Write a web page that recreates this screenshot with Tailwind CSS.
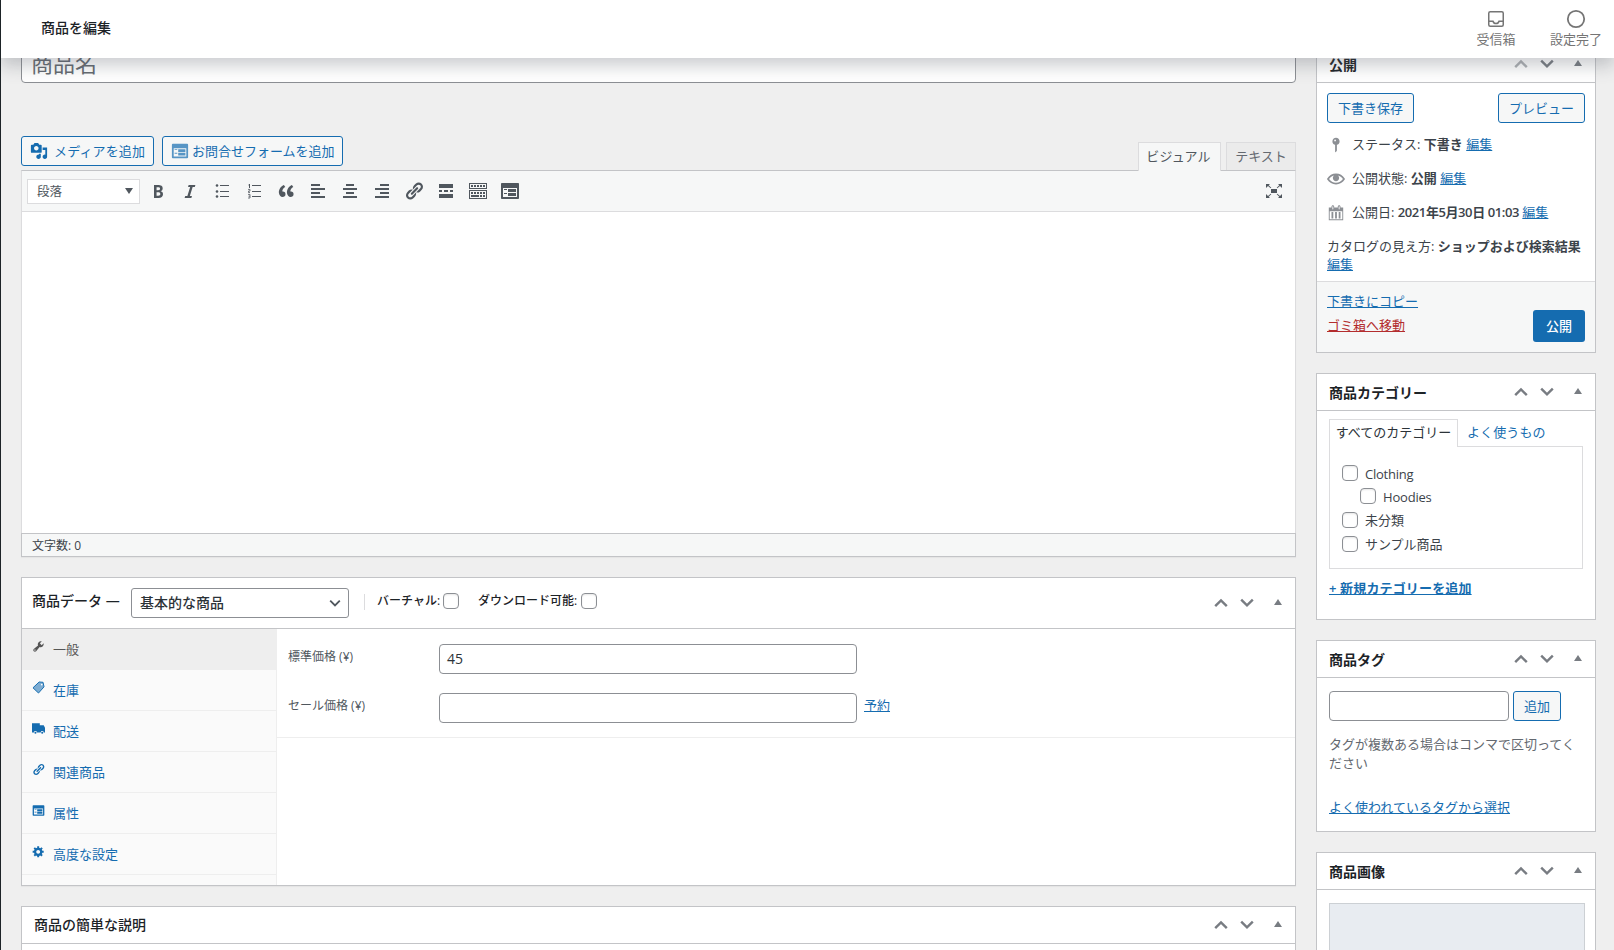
<!DOCTYPE html>
<html lang="ja">
<head>
<meta charset="utf-8">
<title>商品を編集</title>
<script src="https://cdn.jsdelivr.net/npm/@tailwindcss/browser@4"></script>
</head>
<body class="relative w-[1614px] h-[950px] overflow-hidden bg-[#efefef] border-l border-[#1d2327] text-[13px] leading-[18px] text-[#3c434a] font-['Open_Sans','Noto_Sans_CJK_JP',sans-serif]">
<svg class="hidden">
  <symbol id="up" viewBox="0 0 20 20"><path d="M4.200 13.200 10 7.400l5.800 5.800" fill="none" stroke="currentColor" stroke-width="2.400"/></symbol>
  <symbol id="down" viewBox="0 0 20 20"><path d="M4.200 6.600 10 12.400l5.800-5.800" fill="none" stroke="currentColor" stroke-width="2.400"/></symbol>
  <symbol id="tri" viewBox="0 0 8 6"><path d="M4 0l4 6H0z"/></symbol>
  <symbol id="link" viewBox="0 0 20 20"><path d="M17.74 2.76c1.68 1.69 1.68 4.41 0 6.1l-1.53 1.52c-1.12 1.12-2.7 1.47-4.14 1.09l2.62-2.61.76-.77.76-.76c.84-.84.84-2.2 0-3.04-.84-.85-2.2-.85-3.04 0l-.77.76-3.38 3.38c-.37-1.44-.02-3.02 1.1-4.14l1.52-1.53c1.69-1.68 4.42-1.68 6.1 0zM8.59 13.43l5.34-5.34c.42-.42.42-1.1 0-1.52-.44-.43-1.13-.39-1.53 0l-5.33 5.34c-.42.42-.42 1.1 0 1.52.44.43 1.13.39 1.52 0zm-.76 2.29l4.14-4.15c.38 1.44.03 3.02-1.09 4.14l-1.52 1.53c-1.69 1.68-4.41 1.68-6.1 0-1.68-1.68-1.68-4.42 0-6.1l1.53-1.52c1.12-1.12 2.7-1.47 4.14-1.1l-4.14 4.15c-.85.84-.85 2.2 0 3.05.84.84 2.2.84 3.04 0z"/></symbol>
  <symbol id="form" viewBox="0 0 20 20"><path fill-rule="evenodd" d="M2 2h16c.55 0 1 .45 1 1v14c0 .55-.45 1-1 1H2c-.55 0-1-.45-1-1V3c0-.55.45-1 1-1zm15 14V7H3v9h14zM4 8v1h3V8H4zm4 0v3h8V8H8zm-4 4v1h3v-1H4zm4 0v3h8v-3H8z"/></symbol>
</svg>

<!-- edge of the collapsed admin menu -->
<div class="absolute -left-px top-[372px] w-px h-[34px] bg-[#efefef] border-y-[9px] border-[#0a6cb3]"></div>

<header class="relative z-10 h-[58px] bg-white flex items-center justify-between pl-10 shadow-[0_8px_16px_0_rgba(85,93,102,0.3)]">
  <h1 class="text-[14px] leading-5 font-medium text-[#1d2327] -mt-0.5">商品を編集</h1>
  <div class="flex text-[#757575] text-[13px] leading-4 -mt-1 -mr-[2px]">
    <div class="w-20 flex flex-col items-center">
      <svg class="w-6 h-6" viewBox="0 0 24 24" fill="none" stroke="currentColor" stroke-width="1.5"><rect x="4.75" y="4.75" width="14.5" height="14.5" rx="1.5"/><path d="M5 14.200h4c.4 1.500 1.500 2.300 3 2.300s2.600-.8 3-2.300h4"/></svg>
      <span>受信箱</span>
    </div>
    <div class="w-20 flex flex-col items-center">
      <svg class="w-6 h-6" viewBox="0 0 24 24" fill="none" stroke="currentColor" stroke-width="1.8"><circle cx="12" cy="12" r="8.200"/></svg>
      <span>設定完了</span>
    </div>
  </div>
</header>

<div class="flex gap-5 pl-5">
<main class="w-[1275px] shrink-0">
  <div class="-mt-[14px] h-[39px] bg-white border border-[#8c8f94] rounded-[4px] pl-[9px] pb-0.5 flex items-center text-[22px] text-[#646970]">商品名</div>

  <div class="mt-[53px] h-[35px] flex items-start justify-between">
    <div class="flex gap-2 text-[#156cb0]">
      <button class="w-[133px] h-[30px] border border-[#156cb0] rounded-[3px] bg-[#f6f7f7] flex items-center pl-2 gap-1.5">
        <svg class="w-[18px] h-[18px] fill-current" viewBox="0 0 20 20"><path fill-rule="evenodd" d="M13 11V4c0-.55-.45-1-1-1h-1.670L9 1H5L3.670 3H2c-.55 0-1 .45-1 1v7c0 .55.45 1 1 1h10c.55 0 1-.45 1-1zM7 4.500c1.380 0 2.500 1.120 2.500 2.500S8.380 9.500 7 9.500 4.500 8.380 4.500 7 5.620 4.500 7 4.500zM14 6h5v10.500c0 1.380-1.120 2.500-2.500 2.500S14 17.880 14 16.500s1.120-2.500 2.500-2.500c.17 0 .34.02.5.05V9h-3V6zm-4 8.050V13h2v3.500c0 1.380-1.120 2.500-2.500 2.500S7 17.880 7 16.500 8.120 14 9.500 14c.17 0 .34.02.5.05z"/></svg>
        <span class="tracking-[0.15px]">メディアを追加</span>
      </button>
      <button class="w-[181px] h-[30px] border border-[#156cb0] rounded-[3px] bg-[#f6f7f7] flex items-center pl-2 gap-[3px]">
        <svg class="w-[18px] h-[18px] fill-current opacity-70"><use href="#form"/></svg>
        <span>お問合せフォームを追加</span>
      </button>
    </div>
    <div class="flex gap-[5px] pt-1.5">
      <div class="relative z-[1] w-[83px] h-[29px] pb-0.5 bg-[#f6f7f7] border border-b-0 border-[#dcdcde] flex items-center justify-center text-[#50575e] pr-0.5 tracking-[0.15px]">ビジュアル</div>
      <div class="w-[70px] h-7 pb-0.5 bg-[#ebebeb] border border-b-0 border-[#dcdcde] flex items-center justify-center text-[#646970]">テキスト</div>
    </div>
  </div>

  <section class="h-[387px] border border-[#dcdcde] border-t-[#c3c4c7] bg-white flex flex-col mb-5 -mt-px shadow-[0_1px_1px_rgba(0,0,0,0.04)]">
    <div class="h-[41px] shrink-0 bg-[#f6f7f7] border-b border-[#dcdcde] flex items-center pl-[5px] text-[#50575e]">
      <div class="w-[113px] h-[25px] bg-white border border-[#dcdcde] flex items-center justify-between pl-[9px] pr-1.5 mr-0.5 text-[12.5px]"><span class="pt-px">段落</span><svg class="w-2 h-1.5 fill-current" viewBox="0 0 8 6"><path d="M0 0h8L4 6z"/></svg></div>
      <div class="flex text-[#50575e]">
        <div class="w-8 flex justify-center"><svg class="w-5 h-5 fill-current" viewBox="0 0 20 20"><path fill-rule="evenodd" d="M6 4v13h4.540c1.370 0 2.460-.33 3.260-1 .8-.66 1.200-1.580 1.200-2.770 0-.84-.17-1.510-.51-2.010s-.9-.85-1.670-1.030v-.09c.57-.1 1.020-.4 1.360-.9s.51-1.130.51-1.910c0-1.140-.39-1.980-1.170-2.500C12.750 4.260 11.500 4 9.780 4H6zm2.570 5.150V6.260h1.360c.73 0 1.270.11 1.610.32.34.22.51.58.51 1.070 0 .54-.16.92-.47 1.150s-.82.35-1.510.35h-1.500zm0 2.190h1.600c1.440 0 2.160.53 2.160 1.610 0 .6-.17 1.050-.51 1.340s-.86.43-1.570.43H8.570v-3.380z"/></svg></div>
        <div class="w-8 flex justify-center"><svg class="w-5 h-5 fill-current" viewBox="0 0 20 20"><path d="M14.780 6h-2.130l-2.800 9h2.120l-.62 2H4.600l.62-2h2.140l2.800-9H8.030l.62-2h6.750z"/></svg></div>
        <div class="w-8 flex justify-center pl-px"><svg class="w-5 h-5 fill-current" viewBox="0 0 20 20"><circle cx="4" cy="4.500" r="1.300"/><circle cx="4" cy="10.500" r="1.300"/><circle cx="4" cy="15.500" r="1.300"/><path d="M7 4h9v1H7zM7 10h9v1H7zM7 15h9v1H7z"/></svg></div>
        <div class="w-8 flex justify-center pl-px"><svg class="w-5 h-5 fill-current" viewBox="0 0 20 20"><path d="M7 4h9v1H7zM7 10h9v1H7zM7 15h9v1H7zM4 3h1v4H4zM3.500 3.500h1v1h-1z"/><path d="M3 8.400h2v1.700H3.500v1.400H5M3 13.400h2v3.600H3M3.500 15.200H5" fill="none" stroke="currentColor" stroke-width=".8"/></svg></div>
        <div class="w-8 flex justify-center"><svg class="w-5 h-5 fill-current" viewBox="0 0 20 20"><path d="M9.490 13.220c0-.74-.2-1.380-.61-1.900-.62-.78-1.830-.88-2.530-.72-.29-1.650 1.110-3.750 2.920-4.650L7.880 4c-2.730 1.300-5.420 4.280-4.960 8.050C3.210 14.430 4.590 16 6.540 16c.85 0 1.560-.25 2.120-.75s.83-1.180.83-2.030zm8.050 0c0-.74-.2-1.380-.61-1.900-.63-.78-1.830-.88-2.530-.72-.29-1.650 1.110-3.750 2.920-4.650L15.930 4c-2.730 1.300-5.410 4.280-4.950 8.050.29 2.380 1.660 3.950 3.610 3.950.85 0 1.560-.25 2.120-.75s.83-1.180.83-2.030z"/></svg></div>
        <div class="w-8 flex justify-center"><svg class="w-5 h-5 fill-current" viewBox="0 0 20 20"><path d="M12 5V3H3v2h9zm5 4V7H3v2h14zm-5 4v-2H3v2h9zm5 4v-2H3v2h14z"/></svg></div>
        <div class="w-8 flex justify-center"><svg class="w-5 h-5 fill-current" viewBox="0 0 20 20"><path d="M14 5V3H6v2h8zm3 4V7H3v2h14zm-3 4v-2H6v2h8zm3 4v-2H3v2h14z"/></svg></div>
        <div class="w-8 flex justify-center"><svg class="w-5 h-5 fill-current" viewBox="0 0 20 20"><path d="M17 5V3H8v2h9zm0 4V7H3v2h14zm0 4v-2H8v2h9zm0 4v-2H3v2h14z"/></svg></div>
        <div class="w-8 flex justify-center"><svg class="w-5 h-5 fill-current"><use href="#link"/></svg></div>
        <div class="w-8 flex justify-center"><svg class="w-5 h-5 fill-current" viewBox="0 0 20 20"><path d="M17 7V3H3v4h14zM6 11V9H3v2h3zm6 0V9H8v2h4zm5 0V9h-3v2h3zm0 6v-4H3v4h14z"/></svg></div>
        <div class="w-8 flex justify-center"><svg class="w-5 h-5 fill-current" viewBox="0 0 20 20"><path fill-rule="evenodd" d="M1 2h18v6H1zM2 3v4h16V3zM3 4h2v2H3zM6 4h2v2H6zM9 4h2v2H9zM12 4h2v2h-2zM15 4h2v2h-2zM1 9h18v9H1zM2 10v7h16v-7zM3 11h2v2H3zM6 11h2v2H6zM9 11h2v2H9zM12 11h2v2h-2zM15 11h2v2h-2zM3 14h8v2H3zM12 14h2v2h-2zM15 14h2v2h-2z"/></svg></div>
        <div class="w-8 flex justify-center"><svg class="w-5 h-5 fill-current"><use href="#form"/></svg></div>
      </div>
      <svg class="w-5 h-5 fill-current ml-auto mr-[11px]" viewBox="0 0 20 20"><path d="M7 8h6v4H7zM2 3h4L4.700 4.300l2.600 2.400-.6.600-2.700-2.300L2 7zM18 3h-4l1.300 1.300-2.600 2.400.6.600 2.700-2.300L18 7zM2 17h4l-1.300-1.300 2.600-2.400-.6-.6L4 15l-2-2zM18 17h-4l1.300-1.300-2.600-2.400.6-.6L16 15l2-2z"/></svg>
    </div>
    <div class="flex-1"></div>
    <div class="h-6 shrink-0 -mx-px -mb-px border border-[#c3c4c7] bg-[#f6f7f7] flex items-center pl-2.5 pt-0.5 text-[12px]">文字数: 0</div>
  </section>

  <section class="h-[309px] border border-[#c3c4c7] bg-white flex flex-col shadow-[0_1px_1px_rgba(0,0,0,0.04)]">
    <div class="h-[51px] shrink-0 border-b border-[#c3c4c7] flex items-center pl-2.5 text-[#1d2327] font-medium">
      <span class="text-[14px] w-[99px] -mt-1">商品データ —</span>
      <div class="w-[218px] h-[30px] border border-[#8c8f94] rounded-[3px] flex items-center justify-between pl-2 pr-[5px] text-[14px] text-[#2c3338]">基本的な商品<svg class="w-4 h-4 text-[#50575e]" viewBox="0 0 20 20" fill="none" stroke="currentColor" stroke-width="2.300"><path d="M4 7l6 6 6-6"/></svg></div>
      <div class="ml-[15px] w-px h-4 -mt-0.5 bg-[#dcdcde]"></div>
      <div class="flex items-center -mt-1 text-[12px]">
        <span class="ml-3 w-[66px]">バーチャル:</span><span class="w-4 h-4 border border-[#8c8f94] rounded-[4px] bg-white shadow-[inset_0_1px_2px_rgba(0,0,0,0.1)]"></span>
        <span class="ml-[19px] w-[103px]">ダウンロード可能:</span><span class="w-4 h-4 border border-[#8c8f94] rounded-[4px] bg-white shadow-[inset_0_1px_2px_rgba(0,0,0,0.1)]"></span>
      </div>
      <div class="ml-auto flex items-center text-[#787c82] pr-[13px]"><svg class="w-5 h-5 mr-1.5"><use href="#up"/></svg><svg class="w-5 h-5"><use href="#down"/></svg><svg class="w-2 h-1.5 ml-[17px] -mt-0.5 fill-current"><use href="#tri"/></svg></div>
    </div>
    <div class="flex flex-1">
      <nav class="w-[255px] shrink-0 bg-[#fafafa] border-r border-[#eee] text-[#156cb0]">
        <div class="h-[41px] -mr-px bg-[#eee] border-b border-[#eee] flex items-center pl-2.5 pb-px gap-2 text-[#555]"><svg class="w-[13px] h-[13px] -mt-1 fill-current" viewBox="0 0 20 20"><path fill-rule="evenodd" d="M16.680 9.770c-1.340 1.340-3.300 1.670-4.950.99l-5.410 6.520c-.99.99-2.590.99-3.580 0s-.99-2.590 0-3.570l6.520-5.420c-.68-1.650-.35-3.610.99-4.950 1.280-1.280 3.120-1.620 4.720-1.060l-2.890 2.890 2.820 2.820 2.860-2.870c.53 1.580.18 3.390-1.080 4.650zM3.810 16.210c.4.39 1.040.39 1.430 0 .4-.4.4-1.040 0-1.430-.39-.4-1.030-.4-1.430 0-.39.39-.39 1.030 0 1.430z"/></svg>一般</div>
        <div class="h-[41px] border-b border-[#eee] flex items-center pl-2.5 pb-px gap-2"><svg class="w-[13px] h-[13px] -mt-1" viewBox="0 0 20 20"><path d="M11 1.500 17 2l1.500 7L10 18.500 1.500 10.500z" fill="#156cb0" fill-opacity=".55" stroke="#156cb0" stroke-width="1.500"/><circle cx="15" cy="5.500" r="1.300" fill="#fff"/></svg>在庫</div>
        <div class="h-[41px] border-b border-[#eee] flex items-center pl-2.5 pb-px gap-2"><svg class="w-[13px] h-[13px] -mt-1 fill-current" viewBox="0 0 20 20"><path d="M0 2h12v3h6l2 4v7h-2a2.300 2.300 0 0 0-4.600 0H7.600a2.300 2.300 0 0 0-4.600 0H0z"/><circle cx="5.300" cy="16.500" r="1.600"/><circle cx="15.700" cy="16.500" r="1.600"/></svg>配送</div>
        <div class="h-[41px] border-b border-[#eee] flex items-center pl-2.5 pb-px gap-2"><svg class="w-[13px] h-[13px] -mt-1 fill-current"><use href="#link"/></svg>関連商品</div>
        <div class="h-[41px] border-b border-[#eee] flex items-center pl-2.5 pb-px gap-2"><svg class="w-[13px] h-[13px] -mt-1 fill-current"><use href="#form"/></svg>属性</div>
        <div class="h-[41px] border-b border-[#eee] flex items-center pl-2.5 pb-px gap-2"><svg class="w-[13px] h-[13px] -mt-1 fill-current" viewBox="0 0 20 20"><path fill-rule="evenodd" d="M18 12h-2.180c-.17.7-.44 1.350-.81 1.930l1.540 1.540-2.100 2.100-1.540-1.540c-.58.36-1.230.63-1.910.79V19H8v-2.180c-.68-.16-1.330-.43-1.910-.79l-1.540 1.540-2.120-2.120 1.540-1.540c-.36-.58-.63-1.230-.79-1.910H1V9.030h2.170c.16-.7.44-1.350.8-1.940L2.430 5.550l2.100-2.100 1.540 1.540c.58-.37 1.240-.64 1.930-.81V2h3v2.180c.68.16 1.330.43 1.910.79l1.540-1.540 2.120 2.120-1.540 1.540c.36.59.64 1.240.8 1.940H18V12zm-8.500 1.500c1.660 0 3-1.340 3-3s-1.340-3-3-3-3 1.340-3 3 1.340 3 3 3z"/></svg>高度な設定</div>
      </nav>
      <div class="flex-1">
        <div class="h-[109px] border-b border-[#eee] pt-[15px] pl-[11px] text-[12px] text-[#50575e]">
          <div class="flex h-[30px] mb-[19px]"><span class="w-[151px] pt-1">標準価格 (¥)</span><div class="w-[418px] border border-[#8c8f94] rounded-[4px] flex items-center pl-[7px] text-[14px] text-[#2c3338]">45</div></div>
          <div class="flex h-[30px]"><span class="w-[151px] pt-1">セール価格 (¥)</span><div class="w-[418px] border border-[#8c8f94] rounded-[4px]"></div><a class="ml-[7px] pt-[3px] text-[13px] text-[#156cb0] underline">予約</a></div>
        </div>
      </div>
    </div>
  </section>

  <section class="mt-5 h-20 border border-[#c3c4c7] bg-white">
    <div class="h-[37px] border-b border-[#c3c4c7] flex items-center justify-between pl-3 pr-[13px] text-[14px] font-medium text-[#1d2327]">商品の簡単な説明
      <div class="flex items-center text-[#787c82]"><svg class="w-5 h-5 mr-1.5"><use href="#up"/></svg><svg class="w-5 h-5"><use href="#down"/></svg><svg class="w-2 h-1.5 ml-[17px] -mt-0.5 fill-current"><use href="#tri"/></svg></div>
    </div>
  </section>
</main>

<aside class="w-[280px] shrink-0">
  <section class="-mt-[13px] h-[308px] border border-[#c3c4c7] bg-white flex flex-col">
    <div class="h-[37px] shrink-0 border-b border-[#c3c4c7] flex items-center justify-between pl-3 pr-[13px] text-[14px] font-semibold text-[#1d2327]"><span class="pt-0.5">公開</span>
      <div class="flex items-center text-[#787c82]"><svg class="w-5 h-5 mr-1.5 opacity-60"><use href="#up"/></svg><svg class="w-5 h-5"><use href="#down"/></svg><svg class="w-2 h-1.5 ml-[17px] -mt-0.5 fill-current"><use href="#tri"/></svg></div>
    </div>
    <div class="flex-1 px-2.5 pt-2.5">
      <div class="flex justify-between text-[#156cb0]"><button class="w-[87px] h-[30px] border border-[#156cb0] rounded-[3px] bg-[#f6f7f7]">下書き保存</button><button class="w-[87px] h-[30px] border border-[#156cb0] rounded-[3px] bg-[#f6f7f7]">プレビュー</button></div>
      <div class="h-[34px] mt-[5px] flex items-center"><svg class="w-[18px] h-[18px] mr-[7px] fill-[#8c8f94]" viewBox="0 0 20 20"><path fill-rule="evenodd" d="M14 6c0 1.860-1.280 3.410-3 3.860V16c0 1-2 2-2 2V9.860c-1.720-.45-3-2-3-3.860 0-2.210 1.790-4 4-4s4 1.790 4 4zM8 5c0 .55.45 1 1 1s1-.45 1-1-.45-1-1-1-1 .45-1 1z"/></svg><span class="-mt-0.5">ステータス: <b class="font-semibold">下書き</b> <a class="text-[#156cb0] underline">編集</a></span></div>
      <div class="h-[34px] flex items-center"><svg class="w-[18px] h-[18px] mr-[7px] fill-[#8c8f94]" viewBox="0 0 20 20"><path fill-rule="evenodd" d="M19.700 9.400C17.700 6 14 3.900 10 3.900S2.300 6 .3 9.400L0 10l.3.6c2 3.400 5.700 5.500 9.700 5.500s7.700-2.100 9.700-5.500l.3-.6-.3-.6zM10 14.100c-3.100 0-6-1.600-7.700-4.100C3.600 8 5.700 6.600 8 6.100c-.9.6-1.500 1.700-1.500 2.900 0 1.900 1.600 3.500 3.500 3.500s3.500-1.600 3.500-3.500c0-1.200-.6-2.300-1.500-2.900 2.300.5 4.400 1.900 5.700 3.900-1.700 2.500-4.600 4.100-7.700 4.100z"/></svg><span class="-mt-0.5">公開状態: <b class="font-semibold">公開</b> <a class="text-[#156cb0] underline">編集</a></span></div>
      <div class="h-[34px] flex items-center whitespace-nowrap"><svg class="w-[18px] h-[18px] mr-[7px] fill-[#8c8f94]" viewBox="0 0 20 20"><path fill-rule="evenodd" d="M15 4h3v14H2V4h3V3c0-.83.67-1.500 1.500-1.500S8 2.170 8 3v1h4V3c0-.83.67-1.500 1.500-1.500S15 2.170 15 3v1zM6 3v2.500c0 .28.22.5.5.5s.5-.22.5-.5V3c0-.28-.22-.5-.5-.5S6 2.720 6 3zm7 0v2.500c0 .28.22.5.5.5s.5-.22.5-.5V3c0-.28-.22-.5-.5-.5s-.5.22-.5.5zm4 14V8H3v9h14zM7 16V9H5v7h2zm4 0V9H9v7h2zm4 0V9h-2v7h2z"/></svg><span class="-mt-0.5">公開日: <b class="font-semibold tracking-[-0.41px]">2021年5月30日 01:03</b> <a class="text-[#156cb0] underline">編集</a></span></div>
      <div class="pt-[7px] whitespace-nowrap">カタログの見え方: <b class="font-semibold">ショップおよび検索結果</b><br><a class="text-[#156cb0] underline">編集</a></div>
    </div>
    <div class="h-[71px] shrink-0 border-t border-[#dcdcde] bg-[#f6f7f7] px-2.5 flex justify-between">
      <div class="flex flex-col gap-1.5 pt-2.5 underline"><a class="text-[#156cb0]">下書きにコピー</a><a class="text-[#b32d2e]">ゴミ箱へ移動</a></div>
      <button class="mt-7 w-[52px] h-8 rounded-[3px] bg-[#156cb0] text-white font-medium">公開</button>
    </div>
  </section>

  <section class="mt-5 h-[247px] border border-[#c3c4c7] bg-white">
    <div class="h-[37px] border-b border-[#c3c4c7] flex items-center justify-between pl-3 pr-[13px] text-[14px] font-semibold text-[#1d2327]"><span class="pt-px">商品カテゴリー</span>
      <div class="flex items-center text-[#787c82]"><svg class="w-5 h-5 mr-1.5"><use href="#up"/></svg><svg class="w-5 h-5"><use href="#down"/></svg><svg class="w-2 h-1.5 ml-[17px] -mt-0.5 fill-current"><use href="#tri"/></svg></div>
    </div>
    <div class="px-3 pt-2">
      <div class="flex h-[27px]"><div class="relative z-[1] w-[129px] h-7 pb-[3px] bg-white border border-b-0 border-[#dcdcde] flex items-center justify-center text-[#2c3338] whitespace-nowrap">すべてのカテゴリー</div><div class="ml-[9px] pt-1 text-[#156cb0] tracking-[0.1px]">よく使うもの</div></div>
      <div class="w-[254px] h-[123px] border border-[#dcdcde] pl-3 pt-[18px]">
        <label class="flex h-6 gap-[7px] tracking-[-0.25px]"><span class="w-4 h-4 border border-[#8c8f94] rounded-[4px] shadow-[inset_0_1px_2px_rgba(0,0,0,0.1)]"></span>Clothing</label>
        <label class="flex h-6 gap-[7px] pl-[18px] -mt-px tracking-[-0.2px]"><span class="w-4 h-4 border border-[#8c8f94] rounded-[4px] shadow-[inset_0_1px_2px_rgba(0,0,0,0.1)]"></span>Hoodies</label>
        <label class="flex h-6 gap-[7px]"><span class="w-4 h-4 border border-[#8c8f94] rounded-[4px] shadow-[inset_0_1px_2px_rgba(0,0,0,0.1)]"></span><span class="-mt-px">未分類</span></label>
        <label class="flex h-6 gap-[7px]"><span class="w-4 h-4 border border-[#8c8f94] rounded-[4px] shadow-[inset_0_1px_2px_rgba(0,0,0,0.1)]"></span><span class="-mt-px">サンプル商品</span></label>
      </div>
      <a class="block mt-2.5 font-semibold text-[#156cb0] underline tracking-[0.15px]">+ 新規カテゴリーを追加</a>
    </div>
  </section>

  <section class="mt-5 h-48 border border-[#c3c4c7] bg-white">
    <div class="h-[37px] border-b border-[#c3c4c7] flex items-center justify-between pl-3 pr-[13px] text-[14px] font-semibold text-[#1d2327]"><span class="pt-px">商品タグ</span>
      <div class="flex items-center text-[#787c82]"><svg class="w-5 h-5 mr-1.5"><use href="#up"/></svg><svg class="w-5 h-5"><use href="#down"/></svg><svg class="w-2 h-1.5 ml-[17px] -mt-0.5 fill-current"><use href="#tri"/></svg></div>
    </div>
    <div class="px-3 pt-[13px]">
      <div class="flex gap-1"><div class="w-[180px] h-[30px] border border-[#8c8f94] rounded-[4px]"></div><button class="w-12 h-[30px] border border-[#156cb0] rounded-[3px] bg-[#f6f7f7] text-[#156cb0]">追加</button></div>
      <p class="mt-3.5 w-[254px] leading-[18.500px] text-[#646970]">タグが複数ある場合はコンマで区切ってください</p>
      <a class="block mt-[26px] text-[#156cb0] underline">よく使われているタグから選択</a>
    </div>
  </section>

  <section class="mt-5 h-[120px] border border-[#c3c4c7] bg-white">
    <div class="h-[37px] border-b border-[#c3c4c7] flex items-center justify-between pl-3 pr-[13px] text-[14px] font-semibold text-[#1d2327]"><span class="pt-px">商品画像</span>
      <div class="flex items-center text-[#787c82]"><svg class="w-5 h-5 mr-1.5"><use href="#up"/></svg><svg class="w-5 h-5"><use href="#down"/></svg><svg class="w-2 h-1.5 ml-[17px] -mt-0.5 fill-current"><use href="#tri"/></svg></div>
    </div>
    <div class="mx-3 mt-[13px] w-64 h-20 border border-[#ccd0d4] bg-[#e8ecf1]"></div>
  </section>
</aside>
</div>
</body>
</html>
